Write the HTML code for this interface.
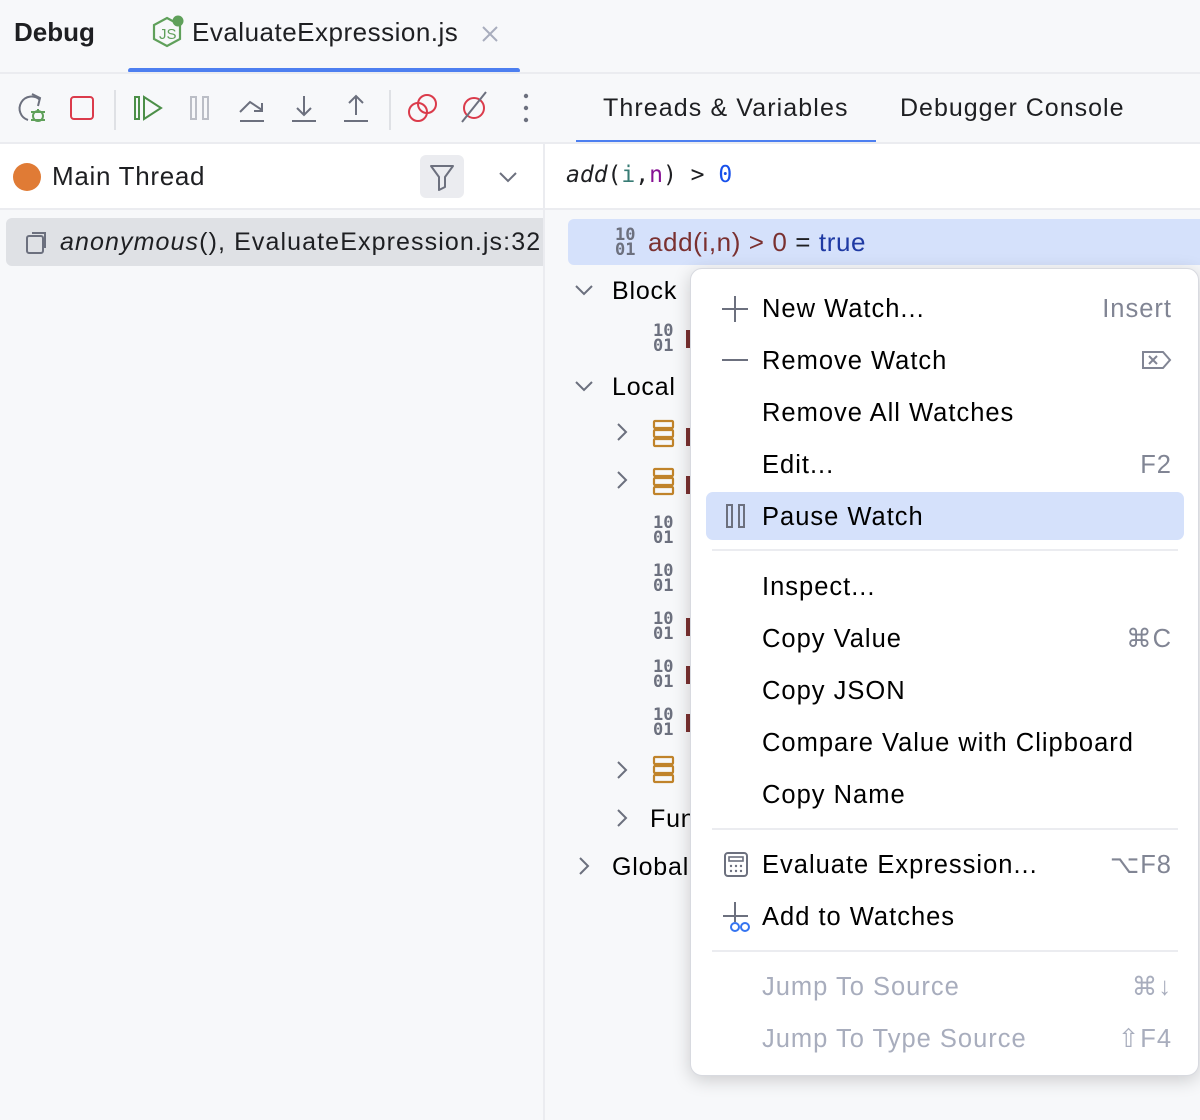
<!DOCTYPE html>
<html><head><meta charset="utf-8"><style>
*{margin:0;padding:0;box-sizing:border-box}
body{width:1200px;height:1120px;background:#f7f8fa;font-family:"Liberation Sans","DejaVu Sans",sans-serif;color:#000;position:relative;overflow:hidden}
.a{position:absolute;white-space:nowrap}
.t{font-size:25px;line-height:30px;letter-spacing:0.8px}
.mi{position:absolute;left:762px;font-size:25.5px;line-height:30px;color:#000;white-space:nowrap;letter-spacing:1px}
.sc{position:absolute;right:28px;font-size:25.5px;line-height:30px;color:#818594;text-align:right;letter-spacing:1px}
.dis{color:#a8adbd}
.bin{position:absolute;font-family:"DejaVu Sans Mono",monospace;font-weight:bold;font-size:17px;line-height:15px;color:#6c707e;letter-spacing:0}
.sep{position:absolute;left:712px;width:466px;height:2px;background:#ebecf0}
.rd{position:absolute;left:686px;width:5px;height:18px;background:#7a3030}
</style></head><body>
<!-- header -->
<div class="a" style="left:14px;top:17px;font-size:26px;font-weight:bold;color:#1e1f22">Debug</div>
<svg class="a" style="left:150px;top:14px" width="40" height="36" viewBox="0 0 40 36"><path d="M17 4 L30 11 L30 25 L17 32 L4 25 L4 11 Z" fill="none" stroke="#5fa05a" stroke-width="2.2"/><text x="9" y="25" font-size="15" fill="#5fa05a" font-family="Liberation Sans">JS</text><circle cx="28" cy="7" r="5.5" fill="#5fa05a"/></svg>
<div class="a" style="left:192px;top:17px;font-size:26px;color:#1e1f22;letter-spacing:0.5px">EvaluateExpression.js</div>
<svg class="a" style="left:480px;top:24px" width="20" height="20"><path d="M3 3l14 14M17 3L3 17" stroke="#a8adbd" stroke-width="2"/></svg>
<div class="a" style="left:128px;top:68px;width:392px;height:5px;background:#4d7ff0;border-radius:3px"></div>
<div class="a" style="left:0;top:72px;width:1200px;height:2px;background:#ebecf0"></div>
<!-- toolbar -->
<svg class="a" style="left:0;top:74px" width="560" height="70" viewBox="0 0 560 70">
<g fill="none" stroke-width="2">
<path d="M40 26 A12 12 0 1 0 28 46" stroke="#6c707e"/><path d="M32 20 L40 24 L38 32" stroke="#6c707e"/>
<circle cx="38" cy="42" r="5" stroke="#5fa05a"/><path d="M31 38h14M31 46h14M38 35v2" stroke="#5fa05a"/>
<rect x="71" y="23" width="22" height="22" rx="3" stroke="#db3b4b"/>
<path d="M115 16v40" stroke="#dfe1e5"/>
<rect x="135" y="23" width="4" height="22" stroke="#4c8f48"/><path d="M144 23 L161 34 L144 45 Z" stroke="#4c8f48"/>
<rect x="191" y="23" width="5" height="22" stroke="#bbbec6"/><rect x="203" y="23" width="5" height="22" stroke="#bbbec6"/>
<path d="M240 47h24M240 38 L250 28 L262 36 M254 37h8v-8" stroke="#6c707e"/>
<path d="M292 47h24M304 22v19M297 34l7 7 7-7" stroke="#6c707e"/>
<path d="M344 47h24M356 41v-19M349 29l7-7 7 7" stroke="#6c707e"/>
<path d="M390 16v40" stroke="#dfe1e5"/>
<circle cx="418" cy="38" r="9" stroke="#db3b4b"/><circle cx="427" cy="30" r="9" stroke="#db3b4b"/>
<circle cx="474" cy="34" r="10" stroke="#db3b4b"/><path d="M462 48 L486 18" stroke="#6c707e"/>
</g>
<circle cx="526" cy="22" r="2.2" fill="#6c707e"/><circle cx="526" cy="34" r="2.2" fill="#6c707e"/><circle cx="526" cy="46" r="2.2" fill="#6c707e"/>
</svg>
<div class="a" style="left:603px;top:94px;font-size:25px;color:#1e1f22;letter-spacing:1.1px">Threads &amp; Variables</div>
<div class="a" style="left:900px;top:94px;font-size:25px;color:#1e1f22;letter-spacing:1px">Debugger Console</div>
<div class="a" style="left:576px;top:140px;width:300px;height:4px;background:#4d7ff0"></div>
<div class="a" style="left:0;top:142px;width:1200px;height:2px;background:#ebecf0"></div>
<!-- left panel -->
<div class="a" style="left:0;top:144px;width:543px;height:64px;background:#fff"></div>
<div class="a" style="left:13px;top:163px;width:28px;height:28px;border-radius:50%;background:#e07b35"></div>
<div class="a" style="left:52px;top:161px;font-size:26px;color:#1e1f22;letter-spacing:0.7px">Main Thread</div>
<div class="a" style="left:420px;top:155px;width:44px;height:43px;border-radius:6px;background:#ebecf0"></div>
<svg class="a" style="left:428px;top:162px" width="28" height="30"><path d="M3 4h22L17 15v10l-6 3V15Z" fill="none" stroke="#6c707e" stroke-width="2" stroke-linejoin="round"/></svg>
<svg class="a" style="left:498px;top:170px" width="20" height="14"><path d="M2 3l8 8 8-8" fill="none" stroke="#6c707e" stroke-width="2"/></svg>
<div class="a" style="left:0;top:208px;width:543px;height:2px;background:#ebecf0"></div>
<div class="a" style="left:6px;top:218px;width:537px;height:48px;background:#dfe1e5;border-radius:6px 0 0 6px"></div>
<svg class="a" style="left:24px;top:229px" width="28" height="28"><rect x="3" y="7" width="16" height="17" rx="2" fill="none" stroke="#6c707e" stroke-width="2"/><path d="M8 4h13v15" fill="none" stroke="#6c707e" stroke-width="2"/></svg>
<div class="a" style="left:60px;top:228px;font-size:25px;color:#1e1f22;letter-spacing:1.1px;width:483px;overflow:hidden"><i>anonymous</i>(), EvaluateExpression.js:32</div>
<div class="a" style="left:543px;top:144px;width:2px;height:976px;background:#ebecf0"></div>
<!-- right panel -->
<div class="a" style="left:545px;top:144px;width:655px;height:64px;background:#fff"></div>
<div class="a" style="left:566px;top:162px;font-family:'DejaVu Sans Mono',monospace;font-size:23px;color:#1e1f22"><i>add</i>(<span style="color:#377b74">i</span>,<span style="color:#871094">n</span>) &gt; <span style="color:#1750eb">0</span></div>
<div class="a" style="left:545px;top:208px;width:655px;height:2px;background:#ebecf0"></div>
<div class="a" style="left:568px;top:219px;width:632px;height:46px;background:#d5e1fb;border-radius:6px 0 0 6px"></div>
<div class="bin" style="left:615px;top:228px">10<br>01</div>
<div class="a" style="left:648px;top:227px;font-size:26px;color:#7a3030;letter-spacing:0.6px">add(i,n) &gt; 0 <span style="color:#1e1f22">=</span> <span style="color:#1f3aa3">true</span></div>
<svg class="a" style="left:574px;top:280px" width="20" height="20"><path d="M2 6l8 8 8-8" fill="none" stroke="#6c707e" stroke-width="2"/></svg>
<div class="a t" style="left:612px;top:276px">Block</div>
<div class="bin" style="left:653px;top:324px">10<br>01</div><div class="rd" style="top:330px"></div>
<svg class="a" style="left:574px;top:376px" width="20" height="20"><path d="M2 6l8 8 8-8" fill="none" stroke="#6c707e" stroke-width="2"/></svg>
<div class="a t" style="left:612px;top:372px">Local</div>
<svg class="a" style="left:612px;top:422px" width="20" height="20"><path d="M6 2l8 8-8 8" fill="none" stroke="#6c707e" stroke-width="2"/></svg>
<svg class="a" style="left:652px;top:419px" width="24" height="30"><g fill="none" stroke="#c0832a" stroke-width="2.2"><rect x="2" y="2" width="19" height="7" rx="1"/><rect x="2" y="11" width="19" height="7" rx="1"/><rect x="2" y="20" width="19" height="7" rx="1"/></g></svg>
<div class="rd" style="top:428px"></div>
<svg class="a" style="left:612px;top:470px" width="20" height="20"><path d="M6 2l8 8-8 8" fill="none" stroke="#6c707e" stroke-width="2"/></svg>
<svg class="a" style="left:652px;top:467px" width="24" height="30"><g fill="none" stroke="#c0832a" stroke-width="2.2"><rect x="2" y="2" width="19" height="7" rx="1"/><rect x="2" y="11" width="19" height="7" rx="1"/><rect x="2" y="20" width="19" height="7" rx="1"/></g></svg>
<div class="rd" style="top:476px"></div>
<div class="bin" style="left:653px;top:516px">10<br>01</div>
<div class="bin" style="left:653px;top:564px">10<br>01</div>
<div class="bin" style="left:653px;top:612px">10<br>01</div><div class="rd" style="top:618px"></div>
<div class="bin" style="left:653px;top:660px">10<br>01</div><div class="rd" style="top:666px"></div>
<div class="bin" style="left:653px;top:708px">10<br>01</div><div class="rd" style="top:714px"></div>
<svg class="a" style="left:612px;top:760px" width="20" height="20"><path d="M6 2l8 8-8 8" fill="none" stroke="#6c707e" stroke-width="2"/></svg>
<svg class="a" style="left:652px;top:755px" width="24" height="30"><g fill="none" stroke="#c0832a" stroke-width="2.2"><rect x="2" y="2" width="19" height="7" rx="1"/><rect x="2" y="11" width="19" height="7" rx="1"/><rect x="2" y="20" width="19" height="7" rx="1"/></g></svg>
<svg class="a" style="left:612px;top:808px" width="20" height="20"><path d="M6 2l8 8-8 8" fill="none" stroke="#6c707e" stroke-width="2"/></svg>
<div class="a t" style="left:650px;top:804px">Fun</div>
<svg class="a" style="left:574px;top:856px" width="20" height="20"><path d="M6 2l8 8-8 8" fill="none" stroke="#6c707e" stroke-width="2"/></svg>
<div class="a t" style="left:612px;top:852px">Global</div>
<!-- menu -->
<div class="a" style="left:690px;top:268px;width:509px;height:808px;background:#fff;border-radius:12px;border:1px solid #d8dae0;box-shadow:0 4px 18px rgba(0,0,0,.18)"></div>
<div class="a" style="left:706px;top:492px;width:478px;height:48px;background:#d5e1fb;border-radius:7px"></div>
<svg class="a" style="left:720px;top:294px" width="30" height="30"><path d="M15 2v26M2 15h26" stroke="#6c707e" stroke-width="2"/></svg>
<div class="mi" style="top:294px">New Watch...</div><div class="sc" style="top:294px">Insert</div>
<svg class="a" style="left:720px;top:346px" width="30" height="30"><path d="M2 14h26" stroke="#6c707e" stroke-width="2"/></svg>
<div class="mi" style="top:346px">Remove Watch</div>
<svg class="a" style="left:1140px;top:348px" width="32" height="24"><path d="M3 4h20l7 8-7 8H3Z" fill="none" stroke="#818594" stroke-width="2"/><path d="M9 8l8 8M17 8l-8 8" stroke="#818594" stroke-width="2"/></svg>
<div class="mi" style="top:398px">Remove All Watches</div>
<div class="mi" style="top:450px">Edit...</div><div class="sc" style="top:450px">F2</div>
<svg class="a" style="left:724px;top:503px" width="26" height="26"><rect x="3" y="2" width="5" height="22" fill="none" stroke="#6c707e" stroke-width="2"/><rect x="15" y="2" width="5" height="22" fill="none" stroke="#6c707e" stroke-width="2"/></svg>
<div class="mi" style="top:502px">Pause Watch</div>
<div class="sep" style="top:549px"></div>
<div class="mi" style="top:572px">Inspect...</div>
<div class="mi" style="top:624px">Copy Value</div><div class="sc" style="top:624px">⌘C</div>
<div class="mi" style="top:676px">Copy JSON</div>
<div class="mi" style="top:728px">Compare Value with Clipboard</div>
<div class="mi" style="top:780px">Copy Name</div>
<div class="sep" style="top:828px"></div>
<svg class="a" style="left:722px;top:851px" width="28" height="28"><rect x="3" y="2" width="22" height="23" rx="3" fill="none" stroke="#6c707e" stroke-width="2"/><rect x="7" y="6" width="14" height="4" fill="none" stroke="#6c707e" stroke-width="1.6"/><g fill="#6c707e"><circle cx="9" cy="15" r="1.2"/><circle cx="14" cy="15" r="1.2"/><circle cx="19" cy="15" r="1.2"/><circle cx="9" cy="20" r="1.2"/><circle cx="14" cy="20" r="1.2"/><circle cx="19" cy="20" r="1.2"/></g></svg>
<div class="mi" style="top:850px">Evaluate Expression...</div><div class="sc" style="top:850px">⌥F8</div>
<svg class="a" style="left:720px;top:900px" width="34" height="34"><path d="M15 2v20M3 16h25" stroke="#6c707e" stroke-width="2"/><circle cx="15" cy="27" r="4" fill="none" stroke="#3574f0" stroke-width="2"/><circle cx="25" cy="27" r="4" fill="none" stroke="#3574f0" stroke-width="2"/></svg>
<div class="mi" style="top:902px">Add to Watches</div>
<div class="sep" style="top:950px"></div>
<div class="mi dis" style="top:972px">Jump To Source</div><div class="sc dis" style="top:972px">⌘↓</div>
<div class="mi dis" style="top:1024px">Jump To Type Source</div><div class="sc dis" style="top:1024px">⇧F4</div>
</body></html>
